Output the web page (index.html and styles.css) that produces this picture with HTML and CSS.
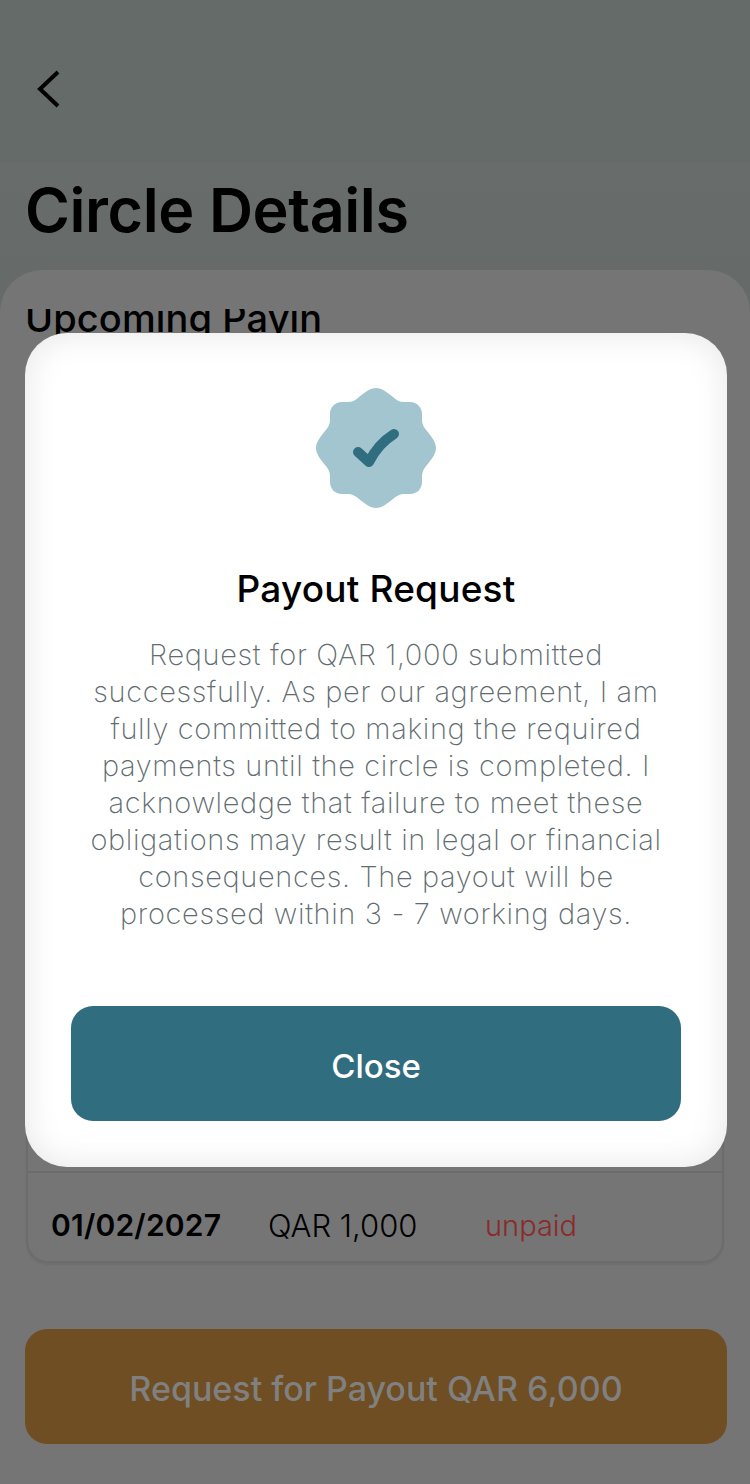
FILE: index.html
```html
<!DOCTYPE html>
<html lang="en">
<head>
    <meta charset="UTF-8">
    <meta name="viewport" content="width=device-width, initial-scale=1.0">
    <title>Circle Details</title>
    <link rel="stylesheet" href="styles.css">
</head>
<body>

<div class="page">
    <header class="topbar">
        <svg class="back-icon" width="24" height="38" viewBox="0 0 24 38" fill="none">
            <path d="M21 2 L3 19 L21 36" stroke="#000" stroke-width="4"/>
        </svg>
    </header>

    <div class="title-area">
        <h1>Circle Details</h1>
    </div>

    <div class="sheet">
        <div class="scroll-area">
            <h2>Upcoming Payin</h2>
            <div class="payin-table">
                <div class="payin-row">
                    <span class="payin-date">01/02/2027</span>
                    <span class="payin-amount">QAR 1,000</span>
                    <span class="payin-status">unpaid</span>
                </div>
            </div>
        </div>
        <button class="payout-button">Request for Payout QAR 6,000</button>
    </div>
</div>

<div class="overlay">
    <div class="modal">
        <svg class="badge" width="120" height="120" viewBox="0 0 120 120">
            <path fill="#a3c5cf" d="M60 0 C66 0 72 5 77 9 C80 12 84 14 88 14 L94 14 C101 14 106 19 106 26 L106 32 C106 36 108 40 111 43 C115 48 120 54 120 60 C120 66 115 72 111 77 C108 80 106 84 106 88 L106 94 C106 101 101 106 94 106 L88 106 C84 106 80 108 77 111 C72 115 66 120 60 120 C54 120 48 115 43 111 C40 108 36 106 32 106 L26 106 C19 106 14 101 14 94 L14 88 C14 84 12 80 9 77 C5 72 0 66 0 60 C0 54 5 48 9 43 C12 40 14 36 14 32 L14 26 C14 19 19 14 26 14 L32 14 C36 14 40 12 43 9 C48 5 54 0 60 0 Z"/>
            <path fill="none" stroke="#306d7e" stroke-width="10" stroke-linecap="round" stroke-linejoin="round" d="M42 64 L53 74 Q62 56 78 46"/>
        </svg>
        <h3>Payout Request</h3>
        <p>Request for QAR 1,000 submitted successfully. As per our agreement, I am fully committed to making the required payments until the circle is completed. I acknowledge that failure to meet these obligations may result in legal or financial consequences. The payout will be processed within 3 - 7 working days.</p>
        <button class="close-button">Close</button>
    </div>
</div>

</body>
</html>
```

FILE: styles.css
```css
* {
    box-sizing: border-box;
}

body {
    font-family: "Inter", "Liberation Sans", sans-serif;
    margin: 0;
    background-color: #757575;
}

.page {
    height: 1484px;
    display: flex;
    flex-direction: column;
    overflow: hidden;
    background: linear-gradient(#6b6f6d, #666b69 269px);
}

.topbar {
    height: 163px;
    background-color: #656b69;
    padding: 70px 0 0 37px;
}

.back-icon {
    display: block;
}

.title-area {
    height: 107px;
    padding: 12px 25px 0;
}

h1 {
    margin: 0;
    font-size: 61px;
    line-height: 70px;
    font-weight: 600;
    letter-spacing: -0.4px;
    color: #000;
}

.sheet {
    flex: 1;
    background-color: #757575;
    border-radius: 42px 42px 0 0;
    padding: 39px 25px 0;
    display: flex;
    flex-direction: column;
}

.scroll-area {
    height: 957px;
    overflow: hidden;
    display: flex;
    flex-direction: column;
    justify-content: space-between;
    padding-bottom: 3px;
}

h2 {
    margin: -13px 0 0;
    font-size: 38px;
    line-height: 44px;
    font-weight: 500;
    letter-spacing: 0.1px;
    color: #000;
}

.payin-table {
    height: 171px;
    margin: 0 1px;
    border: 2px solid #6c6c6c;
    border-radius: 22px;
    padding-top: 77px;
    background-color: #757575;
    box-shadow: 0 2px 2px rgba(0, 0, 0, 0.06);
}

.payin-row {
    display: flex;
    align-items: center;
    border-top: 2px solid #6c6c6c;
    padding: 16px 0 0 23px;
    height: 90px;
}

.payin-date {
    width: 217px;
    font-size: 30px;
    font-weight: 600;
    letter-spacing: 0.2px;
    color: #000;
}

.payin-amount {
    width: 217px;
    font-size: 31px;
    font-weight: 300;
    color: #000;
}

.payin-status {
    font-size: 29px;
    font-weight: 300;
    color: #8a2a2a;
}

.payout-button {
    margin-top: 63px;
    padding-top: 4px;
    height: 115px;
    width: 702px;
    flex-shrink: 0;
    border: none;
    border-radius: 22px;
    background-color: #6e4e22;
    color: #808080;
    font-family: inherit;
    font-size: 34px;
    font-weight: 500;
}

.overlay {
    position: absolute;
    top: 333px;
    left: 25px;
    width: 702px;
}

.modal {
    height: 834px;
    background-color: #fff;
    border-radius: 42px;
    box-shadow: inset 0 0 34px rgba(0, 0, 0, 0.1);
    padding: 55px 46px 46px;
    display: flex;
    flex-direction: column;
    align-items: center;
}

.badge {
    flex-shrink: 0;
}

h3 {
    margin: 59px 0 0;
    font-size: 37px;
    line-height: 44px;
    font-weight: 500;
    letter-spacing: 0.2px;
    color: #000;
}

.modal p {
    margin: 25px 0 0;
    width: 590px;
    font-size: 29px;
    line-height: 37px;
    font-weight: 200;
    letter-spacing: 0.63px;
    text-align: center;
    color: #5f6c70;
}

.close-button {
    margin-top: auto;
    padding-top: 5px;
    width: 100%;
    height: 115px;
    flex-shrink: 0;
    border: none;
    border-radius: 22px;
    background-color: #306d7e;
    color: #fff;
    font-family: inherit;
    font-size: 33px;
    font-weight: 500;
}
```
